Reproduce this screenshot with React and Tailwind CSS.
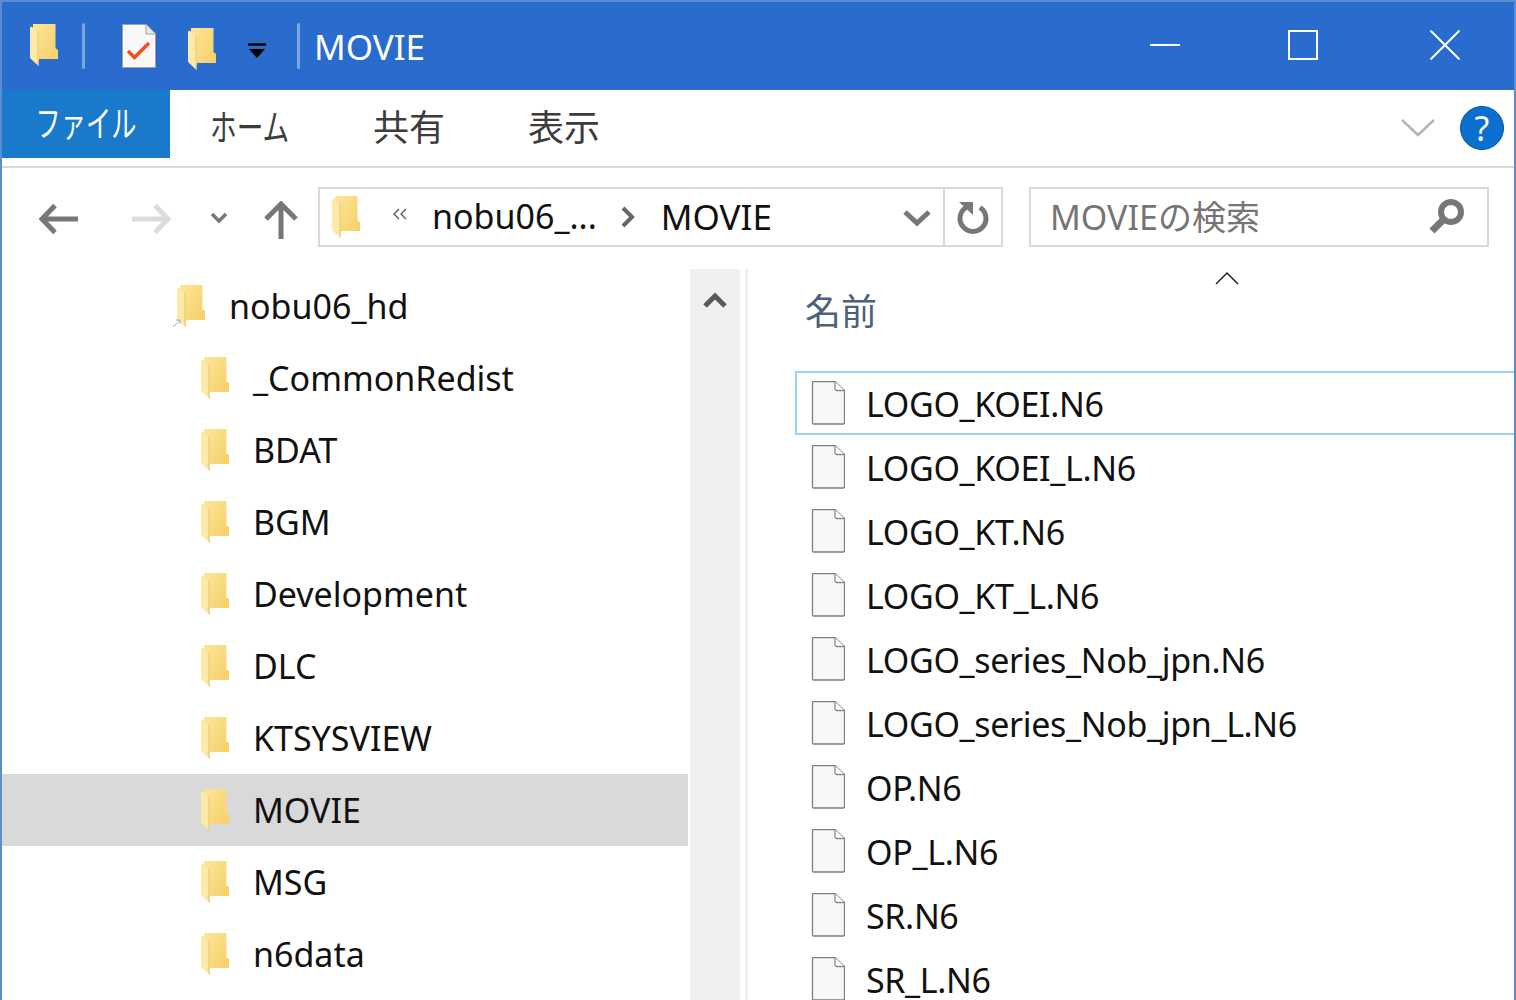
import React from "react";

const FONT = "font-['Noto_Sans','Noto_Sans_CJK_JP',sans-serif]";

function Folder({ className = "", id = "a" }) {
  return (
    <svg viewBox="0 0 28 42" className={`w-[28px] h-[42px] shrink-0 ${className}`}>
      <defs>
        <linearGradient id={`back${id}`} x1="0" y1="0" x2="1" y2="1">
          <stop offset="0" stopColor="#fde59a" />
          <stop offset="1" stopColor="#f6cf66" />
        </linearGradient>
      </defs>
      <path d="M3 0H25.500V24L28 26V35H9V37L3 37Z" fill={`url(#back${id})`} />
      <path d="M0 3.500C0 2.500 1 2.500 2 3L8.500 7.500V42L1.500 35.500C0.500 34.500 0 34 0 33Z" fill="#fdeaa8" />
      <path d="M8.500 7.500V42L7.500 41L7.500 8Z" fill="#e9c266" />
    </svg>
  );
}

function FileIcon() {
  return (
    <svg viewBox="0 0 34 44" className="w-[34px] h-[44px] shrink-0">
      <path d="M1.500 1.500a1 1 0 0 1 1-1H24L33.500 9.500V42a1 1 0 0 1-1 1H2.500a1 1 0 0 1-1-1Z" fill="#f7f7f8" stroke="#7f7f7f" strokeWidth="1.300" />
      <path d="M24 .5V8a1.500 1.500 0 0 0 1.500 1.500H33.500" fill="#fff" stroke="#8a8a8a" strokeWidth="1.300" />
    </svg>
  );
}

function Arrow({ dir = "left", color = "#777777", className = "" }) {
  return (
    <svg viewBox="0 0 40 32" className={`w-[40px] h-[32px] ${className}`}>
      <g transform={dir === "right" ? "rotate(180 20 16)" : undefined} fill="none" stroke={color}>
        <path d="M16 2.500L3 16L16 29.500" strokeWidth="5" />
        <path d="M4 16H39" strokeWidth="5" />
      </g>
    </svg>
  );
}

const navItems = ["_CommonRedist", "BDAT", "BGM", "Development", "DLC", "KTSYSVIEW", "MOVIE", "MSG", "n6data"];
const files = [
  "LOGO_KOEI.N6",
  "LOGO_KOEI_L.N6",
  "LOGO_KT.N6",
  "LOGO_KT_L.N6",
  "LOGO_series_Nob_jpn.N6",
  "LOGO_series_Nob_jpn_L.N6",
  "OP.N6",
  "OP_L.N6",
  "SR.N6",
  "SR_L.N6",
];

export default function App() {
  return (
    <div className={`w-[1516px] h-[1000px] overflow-hidden bg-white flex flex-col border-x-2 border-[#5d8ccf] ${FONT}`}>
      {/* Title bar */}
      <div className="h-[90px] shrink-0 bg-[#2a6ccd] border-t-2 border-[#5d8ccf] flex items-center">
        <Folder id="t1" className="ml-[28px] mb-[2px]" />
        <div className="ml-[24px] w-[3px] h-[46px] bg-[#7fa5de] rounded-sm" />
        <svg viewBox="0 0 34 44" className="ml-[37px] w-[34px] h-[44px]">
          <path d="M.5.500H24L33.500 10V43.500H.5Z" fill="#f8f8f8" stroke="#a89f94" />
          <path d="M24 .5V10H33.500" fill="#e8e8e8" stroke="#a89f94" />
          <path d="M6 27L12.500 33.500L27 19" fill="none" stroke="#f0501a" strokeWidth="3.500" />
        </svg>
        <Folder id="t2" className="ml-[32px] mt-[6px]" />
        <svg viewBox="0 0 20 16" className="ml-[31px] w-[20px] h-[16px] mt-[10px]">
          <path d="M1 1.500H19" stroke="#000" strokeWidth="2.500" />
          <path d="M2 6H18L10 15Z" fill="#000" />
        </svg>
        <div className="ml-[30px] w-[3px] h-[46px] bg-[#7fa5de] rounded-sm" />
        <div className="ml-[14px] text-[35px] leading-none text-white">MOVIE</div>
        <div className="flex-1" />
        <div className="w-[30px] h-[2px] bg-white mr-[108px] -mt-[2px]" />
        <div className="w-[30px] h-[30px] border-2 border-white mr-[112px] -mt-[2px]" />
        <svg viewBox="0 0 30 30" className="w-[30px] h-[30px] mr-[54px] -mt-[2px]">
          <path d="M.5.500L29.500 29.500M29.500.500L.5 29.500" stroke="#fff" strokeWidth="2" />
        </svg>
      </div>

      {/* Ribbon tabs */}
      <div className="h-[78px] shrink-0 border-b-2 border-[#d9d9d9] flex items-start">
        <div className="w-[168px] h-[68px] bg-[#1979ca] text-white flex items-center justify-center">
          <span className="text-[36px] leading-none whitespace-nowrap scale-x-[0.7]">ファイル</span>
        </div>
        <div className="ml-[40px] mt-[16px] w-[108px] text-[36px] leading-[44px] text-[#3c3c3c] whitespace-nowrap origin-left scale-x-[0.74]">ホーム</div>
        <div className="ml-[55px] mt-[16px] text-[36px] leading-[44px] text-[#3c3c3c]">共有</div>
        <div className="ml-[83px] mt-[16px] text-[36px] leading-[44px] text-[#3c3c3c]">表示</div>
        <div className="flex-1" />
        <svg viewBox="0 0 34 20" className="w-[34px] h-[20px] mt-[28px] mr-[25px]">
          <path d="M1 2L17 17L33 2" fill="none" stroke="#b5b5b5" strokeWidth="2.500" />
        </svg>
        <div className="w-[44px] h-[44px] mt-[16px] mr-[10px] rounded-full bg-[#0b6fd0] border border-[#0a4f9a] text-white text-[34px] leading-[42px] text-center">?</div>
      </div>

      {/* Address row */}
      <div className="h-[101px] shrink-0 flex items-start">
        <Arrow className="ml-[37px] mt-[35px]" />
        <Arrow dir="right" color="#dcdcdc" className="ml-[52px] mt-[35px]" />
        <svg viewBox="0 0 18 12" className="ml-[39px] mt-[44px] w-[18px] h-[12px]">
          <path d="M2 2L9 9L16 2" fill="none" stroke="#777" strokeWidth="3.500" />
        </svg>
        <svg viewBox="0 0 34 38" className="ml-[36px] mt-[33px] w-[34px] h-[38px]">
          <path d="M2 18L17 3L32 18M17 3V38" fill="none" stroke="#777" strokeWidth="5" />
        </svg>
        <div className="ml-[20px] mt-[19px] w-[685px] h-[60px] border-2 border-[#d9d9d9] flex items-center">
          <Folder id="ad" className="ml-[12px]" />
          <svg viewBox="0 0 16 12" className="ml-[32px] w-[16px] h-[12px] -mt-[6px]">
            <path d="M7 1L2 6L7 11M14 1L9 6L14 11" fill="none" stroke="#555" strokeWidth="1.300" />
          </svg>
          <div className="ml-[24px] text-[34px] leading-none text-[#111] whitespace-nowrap -mt-[2px]">nobu06_...</div>
          <svg viewBox="0 0 14 22" className="ml-[24px] w-[14px] h-[22px]">
            <path d="M2 2L11 11L2 20" fill="none" stroke="#666" strokeWidth="4" />
          </svg>
          <div className="ml-[26px] text-[35px] leading-none text-[#111] -mt-[2px]">MOVIE</div>
          <div className="flex-1" />
          <svg viewBox="0 0 28 18" className="w-[28px] h-[18px] mr-[12px] mt-[2px]">
            <path d="M2 3L14 14L26 3" fill="none" stroke="#777" strokeWidth="5" />
          </svg>
          <div className="w-[2px] h-full bg-[#d9d9d9]" />
          <div className="w-[56px] flex items-center justify-center">
            <svg viewBox="0 0 34 34" className="w-[34px] h-[34px]">
              <path d="M10 7.500A13 13 0 1 0 24 7.500" fill="none" stroke="#777" strokeWidth="5" />
              <path d="M3 2H17V15Z" fill="#777" />
            </svg>
          </div>
        </div>
        <div className="ml-[26px] mt-[19px] w-[460px] h-[60px] border-2 border-[#d9d9d9] flex items-center">
          <div className="ml-[19px] text-[34px] leading-none text-[#757575]">MOVIEの検索</div>
          <div className="flex-1" />
          <svg viewBox="0 0 36 36" className="w-[36px] h-[36px] mr-[22px]">
            <circle cx="22" cy="13" r="10" fill="none" stroke="#777" strokeWidth="6" />
            <path d="M14 21L3 32" stroke="#777" strokeWidth="7" />
          </svg>
        </div>
      </div>

      {/* Body */}
      <div className="flex-1 flex min-h-0">
        <div className="w-[686px] shrink-0 flex flex-col pt-px">
          <div className="h-[72px] shrink-0 flex items-center relative">
            <Folder id="root" className="ml-[175px]" />
            <svg viewBox="0 0 10 10" className="absolute left-[170px] top-[48px] w-[10px] h-[10px]">
              <path d="M1 9L8 2M4 2H8V6" fill="none" stroke="#aaa" strokeWidth="1" />
            </svg>
            <div className="ml-[24px] text-[34px] leading-none text-[#111]">nobu06_hd</div>
          </div>
          {navItems.map((n, i) => (
            <div key={n} className={`h-[72px] shrink-0 flex items-center ${n === "MOVIE" ? "bg-[#d9d9d9]" : ""}`}>
              <Folder id={`n${i}`} className="ml-[199px]" />
              <div className="ml-[24px] text-[34px] leading-none text-[#111]">{n}</div>
            </div>
          ))}
        </div>
        <div className="ml-[2px] w-[50px] shrink-0 bg-[#f0f0f0] flex justify-center items-start pt-[22px]">
          <svg viewBox="0 0 24 18" className="w-[24px] h-[18px]">
            <path d="M2 15L12 5L22 15" fill="none" stroke="#5a5a5a" strokeWidth="5" />
          </svg>
        </div>
        <div className="ml-[5px] w-[3px] shrink-0 bg-[#f0f0f0]" />
        <div className="flex-1 min-w-0 relative pl-[47px]">
          <svg viewBox="0 0 24 14" className="absolute left-[467px] top-[2px] w-[24px] h-[14px]">
            <path d="M1 13L12 2L23 13" fill="none" stroke="#222" strokeWidth="1.500" />
          </svg>
          <div className="h-[102px] pl-[10px] pt-[20px] text-[36px] leading-[46px] text-[#4c607a]">名前</div>
          <div className="flex flex-col">
            {files.map((f, i) => (
              <div key={f} className={`h-[64px] shrink-0 flex items-center ${i === 0 ? "border-2 border-r-0 border-[#99d1ff] pl-[14px]" : "pl-[16px]"}`}>
                <FileIcon />
                <div className="ml-[21px] pt-[2px] text-[34px] leading-none tracking-[-0.35px] text-[#111] whitespace-nowrap">{f}</div>
              </div>
            ))}
          </div>
        </div>
      </div>
    </div>
  );
}
